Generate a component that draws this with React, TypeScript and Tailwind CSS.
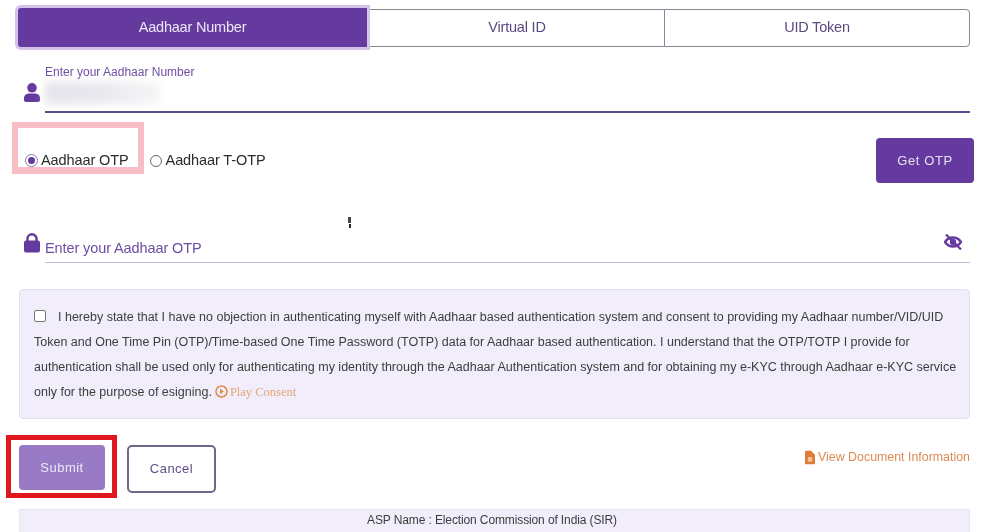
import React from "react";

function UserIcon() {
  return (
    <svg width="16" height="20" viewBox="0 0 16 20" fill="#653a9f">
      <circle cx="8" cy="4.800" r="4.800" />
      <path d="M0 17v-2c0-3 2.500-4.500 5-4.500h6c2.500 0 5 1.500 5 4.500v2c0 1.200-.8 2-2 2H2c-1.200 0-2-.8-2-2z" />
    </svg>
  );
}

function LockIcon() {
  return (
    <svg width="16" height="20" viewBox="0 0 16 20">
      <path d="M3.500 9V5.800a4.500 4.500 0 0 1 9 0V9" fill="none" stroke="#653a9f" strokeWidth="2.400" />
      <rect x="0" y="7.500" width="16" height="12" rx="2" fill="#653a9f" />
    </svg>
  );
}

function EyeOff() {
  return (
    <svg width="18" height="16" viewBox="0 0 18 16" fill="none" stroke="#653a9f">
      <path d="M1 8c2-3 5-4.500 8-4.500S15 5 17 8c-2 3-5 4.500-8 4.500S3 11 1 8z" strokeWidth="2.400" />
      <circle cx="9" cy="8" r="2.800" fill="#653a9f" strokeWidth="1" />
      <path d="M2 0.500l15 15" strokeWidth="2.200" />
    </svg>
  );
}

export default function App() {
  return (
    <div
      className="relative w-[992px] h-[532px] overflow-hidden bg-white"
      style={{ fontFamily: '"Liberation Sans", Arial, sans-serif', color: "#333", filter: "blur(0.4px)" }}
    >
      {/* Tabs */}
      <div className="flex items-center pt-[5px] pl-[15px] h-[50px] text-[14.500px] tracking-[-0.2px]">
        <div className="w-[355px] h-[45px] rounded-l-[6px] border-[3px] border-[#d3c3ea] bg-[#653a9f] flex items-center justify-center text-[#ece6f5]">
          Aadhaar Number
        </div>
        <div className="w-[294px] h-[38px] border-y border-[#8a8694] flex items-center justify-center text-[#5a4a80]">
          Virtual ID
        </div>
        <div className="w-[306px] h-[38px] border border-[#8a8694] rounded-r-[4px] flex items-center justify-center text-[#5a4a80]">
          UID Token
        </div>
      </div>

      {/* Aadhaar number */}
      <div className="flex items-end pl-[24px] pr-[22px] mt-[15px] h-[48px]">
        <div className="w-[21px] pb-[10px]">
          <UserIcon />
        </div>
        <div className="flex-1 h-full border-b-2 border-[#5a4a8c]">
          <div className="text-[12px] leading-[14px] text-[#6b4ea3]">Enter your Aadhaar Number</div>
          <div className="w-[115px] h-[22px] mt-[3px] bg-gradient-to-r from-[#e5e4ec] via-[#e9e8ee] to-[#f6f6f8] blur-[4px]" />
        </div>
      </div>

      {/* OTP type */}
      <div className="flex items-center justify-between pl-[25px] pr-[18px] mt-[25px] h-[45px]">
        <div className="relative flex items-center text-[14.500px] tracking-[-0.1px] text-[#2c2c2c]">
          <span className="w-[13px] h-[13px] rounded-full border border-[#8a7aa8] flex items-center justify-center mr-[3px]">
            <span className="w-[7px] h-[7px] rounded-full bg-[#653a9f]" />
          </span>
          <span className="mr-[21px]">Aadhaar OTP</span>
          <span className="w-[12px] h-[12px] rounded-full border border-[#666] mr-[4px]" />
          <span>Aadhaar T-OTP</span>
          <div className="absolute left-[-13px] top-[-28px] w-[132px] h-[52px] border-[6px] border-b-[7px] border-[#f8bec6]" />
        </div>
        <button className="w-[98px] h-[45px] rounded-[4px] bg-[#653a9f] text-[#e6e0f0] text-[13px] tracking-[0.6px]">
          Get OTP
        </button>
      </div>

      {/* OTP input */}
      <div className="flex items-end pl-[24px] pr-[22px] mt-[49px] h-[31px]">
        <div className="w-[21px] pb-[10px]">
          <LockIcon />
        </div>
        <div className="flex-1 h-[27px] border-b border-[#c4bfd8] flex items-center justify-between pr-[8px] text-[14.500px] tracking-[-0.1px] text-[#6b4ea3]">
          <span className="pb-[1px]">Enter your Aadhaar OTP</span>
          <span className="mt-[-15px]">
            <EyeOff />
          </span>
        </div>
      </div>

      {/* Consent */}
      <div className="mt-[26px] ml-[19px] w-[951px] h-[130px] rounded-[4px] border border-[#e3dfef] bg-[#f1edfa] pl-[14px] pr-[8px] pt-[15px] text-[12.500px] leading-[25px] text-[#3d3d3d]">
        <span className="inline-block w-[12px] h-[12px] mr-[12px] align-[-1px] bg-white border border-[#777] rounded-[2px]" />
        I hereby state that I have no objection in authenticating myself with Aadhaar based authentication system and consent to providing my Aadhaar number/VID/UID Token and One Time Pin (OTP)/Time-based One Time Password (TOTP) data for Aadhaar based authentication. I understand that the OTP/TOTP I provide for authentication shall be used only for authenticating my identity through the Aadhaar Authentication system and for obtaining my e-KYC through Aadhaar e-KYC service only for the purpose of esigning.{" "}
        <svg className="inline align-[-2px] mr-[-2px]" width="13" height="13" viewBox="0 0 13 13" fill="none">
          <circle cx="6.500" cy="6.500" r="5.500" stroke="#e08a4a" strokeWidth="1.500" />
          <path d="M5 3.800l4 2.700-4 2.700z" fill="#e08a4a" />
        </svg>{" "}
        <span className="text-[#e3a678]" style={{ fontFamily: '"Liberation Serif", serif' }}>
          Play Consent
        </span>
      </div>

      {/* Actions */}
      <div className="flex items-start pl-[19px] pr-[22px] mt-[26px] h-[47px]">
        <div className="relative">
          <button className="block w-[86px] h-[45px] rounded-[4px] bg-[#987bc4] text-[#eee8f6] text-[13px] tracking-[0.5px]">
            Submit
          </button>
          <div className="absolute left-[-13px] top-[-10px] w-[111px] h-[63px] border-[5px] border-[#e0171f]" />
        </div>
        <button className="ml-[22px] w-[89px] h-[48px] rounded-[5px] border-2 border-[#6c6889] bg-white text-[#5f4f85] text-[13px] tracking-[0.5px]">
          Cancel
        </button>
        <div className="ml-auto flex items-center gap-[3px] text-[12.400px] text-[#dc8a52] pt-[3px]">
          <svg width="10" height="15" viewBox="0 0 11 15">
            <path d="M0 1a1 1 0 0 1 1-1h5.500L11 4.500V14a1 1 0 0 1-1 1H1a1 1 0 0 1-1-1z" fill="#e07b36" />
            <rect x="3" y="7" width="5" height="5" fill="#f5c09a" />
          </svg>
          View Document Information
        </div>
      </div>

      {/* ASP */}
      <div className="mt-[17px] ml-[19px] w-[951px] h-[30px] bg-[#f1edfa] border border-[#e8e4f2] pr-[5px] text-center text-[12px] tracking-[-0.12px] leading-[20px] text-[#3d3d3d]">
        ASP Name : Election Commission of India (SIR)
      </div>

      {/* Mouse cursor */}
      <svg className="absolute left-[347px] top-[217px]" width="6" height="12" viewBox="0 0 6 12">
        <path d="M1 0v6h3V0z" fill="#444" />
        <path d="M2 7h2v4H2z" fill="#222" />
      </svg>
    </div>
  );
}
